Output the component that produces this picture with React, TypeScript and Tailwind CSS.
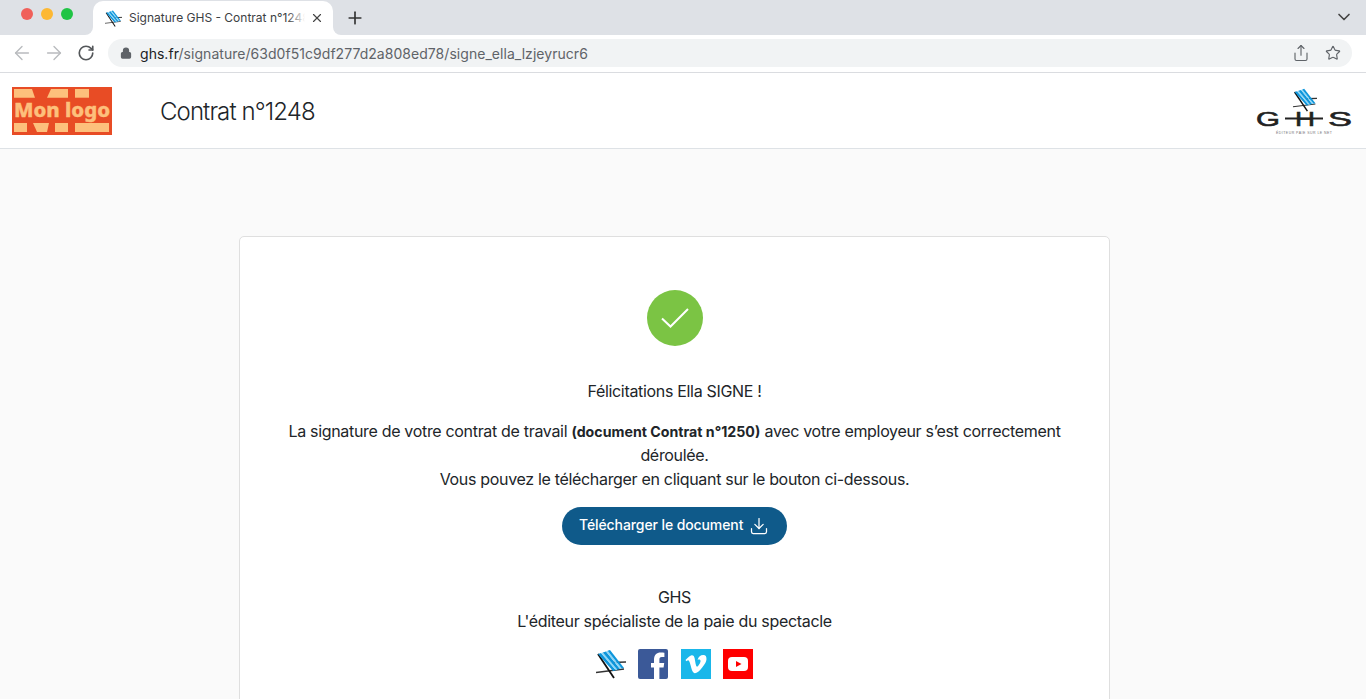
import { ArrowLeft, ArrowRight, ChevronDown, Download, Lock, Plus, RotateCw, Share, Star, X } from 'lucide-react'
import { FaVimeoV } from 'react-icons/fa'

function ChairShapes() {
  return (
    <>
      <path d="M16 13.5 L30 13" stroke="#333" strokeWidth="1.7" />
      <path d="M0 23.5 L28 20" stroke="#333" strokeWidth="1.3" />
      <path d="M2 5 L18 29" stroke="#111" strokeWidth="1.8" />
      <path d="M2 5 L5 4 L19.8 21.3 L17 22 Z" fill="#0d96dc" />
      <path d="M5 4 L6.8 3.4 L21.4 20.8 L19.8 21.3 Z" fill="#8ed6f6" />
      <path d="M6.8 3.4 L10 2.4 L24 20 L21.4 20.8 Z" fill="#0d96dc" />
      <path d="M10 2.4 L11.6 1.8 L25.8 19.6 L24 20 Z" fill="#8ed6f6" />
      <path d="M11.6 1.8 L14 1 L28 19 L25.8 19.6 Z" fill="#0d96dc" />
    </>
  )
}

function Chair({ size }: { size: number }) {
  return (
    <svg width={size} height={size} viewBox="0 0 30 30" fill="none">
      <ChairShapes />
    </svg>
  )
}

function MonLogo() {
  return (
    <svg width="100" height="48" viewBox="0 0 100 48">
      <rect width="100" height="48" fill="#e84c25" />
      <g fill="#fdc07c">
        <path d="M2 2 L20 2 L23 10.7 L2 10.7 Z" />
        <path d="M39 2 L56 2 L56 10.7 L35 10.7 Z" />
        <rect x="63" y="2" width="14" height="8.7" />
        <rect x="2" y="36" width="13" height="9" />
        <path d="M21 36 L37 36 L35 45 L25 45 Z" />
        <rect x="43" y="36" width="13" height="9" />
        <rect x="63" y="36" width="34" height="9" />
        <text x="2" y="29.5" stroke="#fdc07c" strokeWidth="0.4" fontFamily="'Noto Sans', sans-serif" fontWeight="800" fontSize="20" textLength="96" lengthAdjust="spacingAndGlyphs">Mon logo</text>
      </g>
    </svg>
  )
}

function GhsLogo() {
  return (
    <svg width="96" height="49" viewBox="0 0 96 49" fill="#222" fontFamily="'Liberation Sans', sans-serif">
      <g transform="translate(37 1) scale(0.8)">
        <ChairShapes />
      </g>
      <g stroke="#222" strokeWidth="0.6">
        <text x="0" y="39" fontSize="21" textLength="24" lengthAdjust="spacingAndGlyphs">G</text>
        <text x="39" y="39" fontSize="21" textLength="20" lengthAdjust="spacingAndGlyphs">H</text>
        <text x="72" y="39" fontSize="21" textLength="24" lengthAdjust="spacingAndGlyphs">S</text>
      </g>
      <path d="M29 31.5 H67" stroke="#222" strokeWidth="1.8" />
      <text x="20" y="46.5" fontSize="3.5" fill="#777" textLength="56" lengthAdjust="spacing">ÉDITEUR PAIE SUR LE NET</text>
    </svg>
  )
}

export default function App() {
  return (
    <div className="flex h-[699px] w-[1366px] flex-col overflow-hidden bg-[#fafafa] font-['Inter',sans-serif] text-[#212529]">
      {/* Browser tabs */}
      <div className="flex h-[35px] shrink-0 items-end bg-[#dee1e6] pr-[12px]">
        <div className="flex h-[35px] w-[93px] shrink-0 items-center gap-2 pb-[7px] pl-[21px]">
          <span className="h-3 w-3 rounded-full bg-[#f0605a]" />
          <span className="h-3 w-3 rounded-full bg-[#fdb833]" />
          <span className="h-3 w-3 rounded-full bg-[#20c445]" />
        </div>
        <div className="relative flex h-[34px] w-[240px] shrink-0 items-center rounded-t-[10px] bg-white pl-[12px]">
          <span className="absolute -left-[8px] bottom-0 h-2 w-2 bg-white">
            <span className="block h-full w-full rounded-br-[8px] bg-[#dee1e6]" />
          </span>
          <span className="absolute -right-[8px] bottom-0 h-2 w-2 bg-white">
            <span className="block h-full w-full rounded-bl-[8px] bg-[#dee1e6]" />
          </span>
          <Chair size={17} />
          <span className="ml-[7px] w-[176px] overflow-hidden whitespace-nowrap text-[12px] text-[#3c4043]">Signature GHS - Contrat n°1248</span>
          <span className="absolute right-[28px] top-0 h-full w-[18px] bg-gradient-to-r from-transparent to-white" />
          <X size={14} strokeWidth={2} className="ml-[5px] text-[#444]" />
        </div>
        <Plus size={20} strokeWidth={2} className="mb-[7px] ml-[12px] text-[#333]" />
        <ChevronDown size={20} strokeWidth={2} className="mb-[8px] ml-auto text-[#444]" />
      </div>

      {/* Browser toolbar */}
      <div className="flex h-[38px] shrink-0 items-center border-b border-[#dadce0] bg-white pb-[1px] pl-[11px] pr-[14px]">
        <ArrowLeft size={22} strokeWidth={1.5} className="text-[#b9bbbe]" />
        <ArrowRight size={22} strokeWidth={1.5} className="ml-[10px] text-[#b9bbbe]" />
        <RotateCw size={18} strokeWidth={2.2} className="ml-[12px] text-[#54575a]" />
        <div className="ml-[13px] flex h-[28px] flex-1 items-center rounded-full bg-[#f1f3f4] pl-[12px] pr-[11px]">
          <Lock size={12} strokeWidth={2.5} className="fill-[#5f6368] text-[#5f6368]" />
          <span className="ml-[8px] text-[14px] tracking-[0.04px] text-[#5f6368]">
            <span className="text-[#202124]">ghs.fr</span>/signature/63d0f51c9df277d2a808ed78/signe_ella_lzjeyrucr6
          </span>
          <Share size={18} strokeWidth={1.5} className="ml-auto text-[#5f6368]" />
          <Star size={16} strokeWidth={1.7} className="ml-[15px] text-[#5f6368]" />
        </div>
      </div>

      {/* App header */}
      <header className="flex h-[76px] shrink-0 items-center border-b border-[#dee2e6] bg-white pl-[12px] pr-[14px]">
        <MonLogo />
        <h1 className="ml-[48px] mt-[3px] text-[24px] font-light tracking-[-0.9px] text-[#212529]">Contrat n°1248</h1>
        <div className="ml-auto mt-[2px]">
          <GhsLogo />
        </div>
      </header>

      {/* Confirmation card */}
      <main className="flex flex-1 justify-center pr-[17px] pt-[87px]">
        <div className="flex h-[600px] w-[871px] shrink-0 flex-col items-center rounded-[5px] border border-[#dfdfdf] bg-white px-10 pt-[53px] text-center text-[16px] leading-[24px] tracking-[-0.32px]">
          <div className="flex h-14 w-14 items-center justify-center rounded-full bg-[#7bc444]">
            <svg width="28" height="20" viewBox="0 0 28 20" fill="none">
              <path d="M1 10.5 L9.5 18.5 L27 1" stroke="#fff" strokeWidth="2" />
            </svg>
          </div>
          <p className="mt-[33px]">Félicitations Ella SIGNE !</p>
          <p className="mt-4">
            La signature de votre contrat de travail <span className="text-[14.2px] font-bold leading-none tracking-normal">(document Contrat n°1250)</span> avec votre employeur s’est correctement déroulée.
            <br />
            Vous pouvez le télécharger en cliquant sur le bouton ci-dessous.
          </p>
          <button className="mt-4 flex h-[38px] w-[225px] items-center gap-[6px] rounded-full bg-[#0f5a8a] pl-[17px] text-[14px] font-medium tracking-[-0.1px] text-white">
            <span className="mb-[2px]">Télécharger le document</span>
            <Download size={20} strokeWidth={1.5} />
          </button>
          <p className="mt-10">GHS</p>
          <p>L'éditeur spécialiste de la paie du spectacle</p>
          <div className="mt-4 flex w-[157px] items-center gap-3">
            <Chair size={30} />
            <div className="flex h-[30px] w-[30px] items-end justify-end overflow-hidden rounded-[2px] bg-[#3b5998]">
              <svg width="17" height="27" viewBox="0 0 17 27">
                <path d="M3 27 V15.5 H0 V11 H3 V7.5 C3 3 5.8 0.5 9.6 0.5 C11.4 0.5 13 0.6 13.4 0.7 V5 H10.8 C8.8 5 8.4 6 8.4 7.4 V11 H13.2 L12.6 15.5 H8.4 V27 Z" fill="#fff" />
              </svg>
            </div>
            <div className="ml-[1px] flex h-[30px] w-[30px] items-center justify-center bg-[#1ab7ea]">
              <FaVimeoV size={24} className="text-white" />
            </div>
            <div className="flex h-[30px] w-[30px] items-center justify-center bg-[#ff0000]">
              <svg width="20" height="14" viewBox="0 0 20 14">
                <rect width="20" height="14" rx="4" fill="#fff" />
                <path d="M8 4 L13.5 7 L8 10 Z" fill="#ff0000" />
              </svg>
            </div>
          </div>
        </div>
      </main>
    </div>
  )
}
